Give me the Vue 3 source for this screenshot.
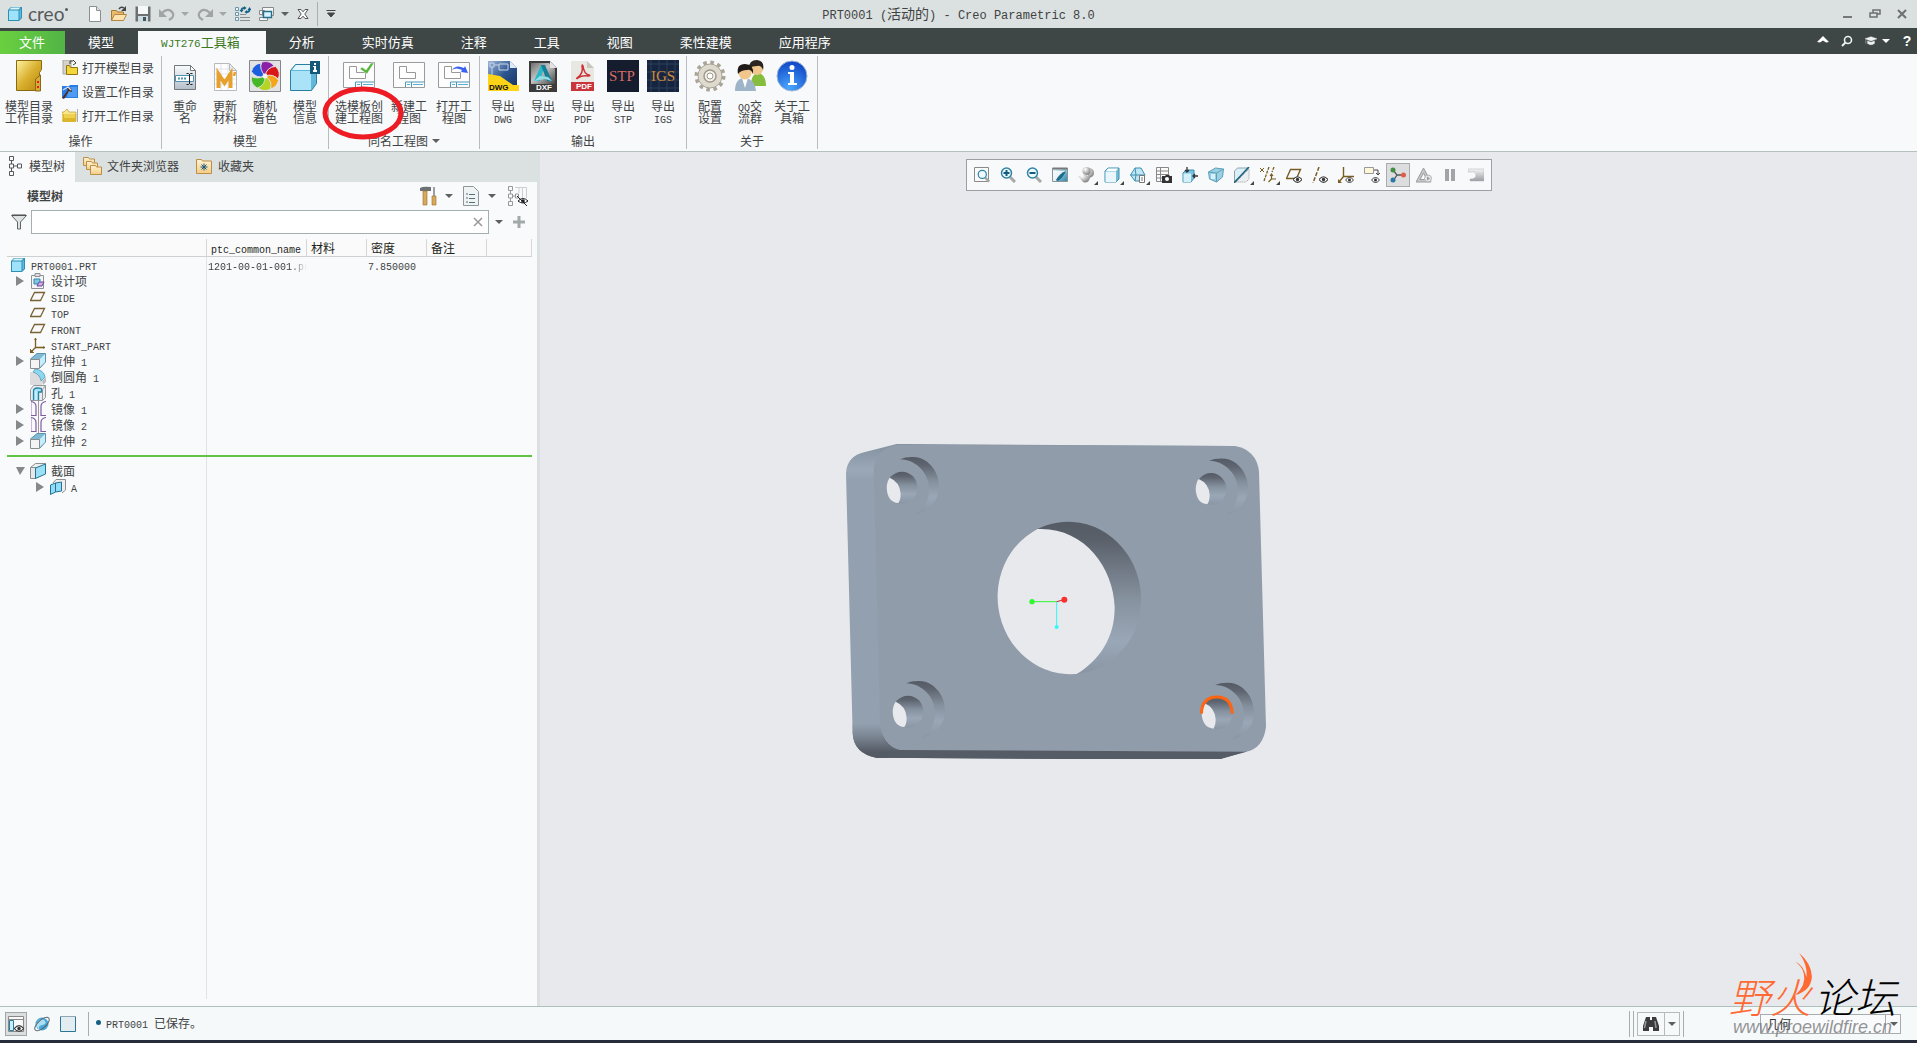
<script setup>
import { h, ref } from 'vue'

// Splits a string so that Latin runs take a half-width monospaced face beside full-width Han characters.
const Mix = (props) =>
  h('span', { class: 'mix' },
    props.text.split(/([\x20-\x7e]+)/).filter(Boolean).map((part) =>
      /^[\x20-\x7e]/.test(part) ? h('span', { class: 'lat' }, part) : part))
Mix.props = ['text']

const tabs = ['模型', 'WJT276工具箱', '分析', '实时仿真', '注释', '工具', '视图', '柔性建模', '应用程序']
const active = ref('WJT276工具箱')

const folderActions = [
  { icon: 'dir-open', label: '打开模型目录' },
  { icon: 'dir-set', label: '设置工作目录' },
  { icon: 'dir-work', label: '打开工作目录' },
]

const groups = [
  { name: '操作', cls: 'g-ops', items: [{ icon: 'dir-big', lines: ['模型目录', '工作目录'], w: 'w58' }], side: folderActions },
  { name: '模型', cls: 'g-model', items: [
    { icon: 'rename', lines: ['重命', '名'] },
    { icon: 'material', lines: ['更新', '材料'] },
    { icon: 'wheel', lines: ['随机', '着色'] },
    { icon: 'info-box', lines: ['模型', '信息'] },
  ] },
  { name: '同名工程图', cls: 'g-drw', caret: true, items: [
    { icon: 'drw-check', lines: ['选模板创', '建工程图'], w: 'w50', marked: true },
    { icon: 'drw', lines: ['新建工', '程图'], w: 'w50' },
    { icon: 'drw-open', lines: ['打开工', '程图'] },
  ] },
  { name: '输出', cls: 'g-out', items: [
    { icon: 'dwg', lines: ['导出', 'DWG'], cap: { t: 'DWG', x: 2, y: 30 } },
    { icon: 'dxf', lines: ['导出', 'DXF'], cap: { t: 'DXF', x: 9, y: 30 } },
    { icon: 'pdf', lines: ['导出', 'PDF'], cap: { t: 'PDF', x: 9, y: 29 } },
    { icon: 'stp', lines: ['导出', 'STP'], cap: { t: 'STP', x: 2, y: 21 } },
    { icon: 'igs', lines: ['导出', 'IGS'], cap: { t: 'IGS', x: 4, y: 21 } },
  ] },
  { name: '关于', cls: 'g-about', items: [
    { icon: 'gear', lines: ['配置', '设置'] },
    { icon: 'people', lines: ['QQ交', '流群'] },
    { icon: 'about', lines: ['关于工', '具箱'], w: 'w44' },
  ] },
]

const rows = [
  { lvl: 0, icon: 'part', text: 'PRT0001.PRT', name: '1201-00-01-001.prt', density: '7.850000' },
  { lvl: 1, arrow: 'right', icon: 'design', text: '设计项' },
  { lvl: 1, icon: 'plane', text: 'SIDE' },
  { lvl: 1, icon: 'plane', text: 'TOP' },
  { lvl: 1, icon: 'plane', text: 'FRONT' },
  { lvl: 1, icon: 'csys', text: 'START_PART' },
  { lvl: 1, arrow: 'right', icon: 'extrude', text: '拉伸 1' },
  { lvl: 1, icon: 'round', text: '倒圆角 1' },
  { lvl: 1, icon: 'hole', text: '孔 1' },
  { lvl: 1, arrow: 'right', icon: 'mirror', text: '镜像 1' },
  { lvl: 1, arrow: 'right', icon: 'mirror', text: '镜像 2' },
  { lvl: 1, arrow: 'right', icon: 'extrude', text: '拉伸 2' },
]
const sectionRows = [
  { lvl: 1, arrow: 'down', icon: 'section', text: '截面' },
  { lvl: 2, arrow: 'right', icon: 'section-a', text: 'A' },
]

const viewTools = [
  ['refit', '重新调整'], ['zoom-in', '放大'], ['zoom-out', '缩小'], ['repaint', '重画'], ['render', '渲染选项'],
  ['shade', '显示样式'], ['saved', '已保存方向'], ['viewmgr', '视图管理器'], ['normal', '视图法向'], ['persp', '透视图'],
  ['clip', '截面'], ['datum', '基准显示过滤器'], ['planes', '平面显示'], ['axes', '轴显示'], ['csysd', '坐标系显示'],
  ['notes', '注释显示'], ['spin', '旋转中心'], ['sim', '仿真'], ['pause', '暂停'], ['result', '结果'],
]
const query = ref('')
</script>

<template>
  <div class="app">
    <svg class="sprite" aria-hidden="true">
      <defs>
        <linearGradient id="gold" x1="0" y1="0" x2="1" y2="1"><stop offset="0" stop-color="#fff3a0" /><stop offset=".5" stop-color="#d9b030" /><stop offset="1" stop-color="#b8860b" /></linearGradient>
        <linearGradient id="tan" x1="0" y1="0" x2="0" y2="1"><stop offset="0" stop-color="#fff2d4" /><stop offset="1" stop-color="#f3cd86" /></linearGradient>
        <linearGradient id="blu" x1="0" y1="0" x2="1" y2="1"><stop offset="0" stop-color="#eefaff" /><stop offset="1" stop-color="#2b86ad" /></linearGradient>
        <linearGradient id="gry" x1="0" y1="0" x2="0" y2="1"><stop offset="0" stop-color="#f4f5f6" /><stop offset="1" stop-color="#9a9ea2" /></linearGradient>
        <linearGradient id="page" x1="0" y1="0" x2="0" y2="1"><stop offset="0" stop-color="#fafbfc" /><stop offset="1" stop-color="#b4bfca" /></linearGradient>
        <linearGradient id="dwgb" x1="0" y1="0" x2="1" y2="1"><stop offset="0" stop-color="#9fb6d8" /><stop offset=".5" stop-color="#2c5590" /><stop offset="1" stop-color="#15305c" /></linearGradient>
        <linearGradient id="dxfb" x1="0" y1="0" x2="1" y2="1"><stop offset="0" stop-color="#6e6e6e" /><stop offset=".45" stop-color="#c4c4c4" /><stop offset="1" stop-color="#454545" /></linearGradient>
        <radialGradient id="inf" cx=".4" cy=".9" r=".9"><stop offset="0" stop-color="#4aa8ff" /><stop offset="1" stop-color="#0f45c4" /></radialGradient>
        <radialGradient id="ball" cx=".35" cy=".3" r=".8"><stop offset="0" stop-color="#fff" /><stop offset="1" stop-color="#777" /></radialGradient>
      </defs>

      <!-- quick access -->
      <symbol id="cube" viewBox="0 0 16 16"><path d="M1 4l3-3h11v11l-3 3H1z" fill="#2d8fb3" /><path d="M2 4.500h9.500V14H2z" fill="#9fe2fb" /><path d="M2.500 3.500L4.500 1.500h9L11.500 3.500z" fill="#d9f5ff" /><path d="M12.500 4.500l1.500-2v9l-1.500 2z" fill="#5dbce0" /></symbol>
      <symbol id="new" viewBox="0 0 16 16"><path d="M2.500.5h7l4 4v11h-11z" fill="#fff" stroke="#8b8f92" /><path d="M9.500.5v4h4" fill="#dde1e4" stroke="#8b8f92" /></symbol>
      <symbol id="open" viewBox="0 0 16 16"><path d="M.5 14.500v-10h5l1 1.500h6v3" fill="#e9bb6c" stroke="#a87931" /><path d="M.5 14.500l3-6h12l-3 6z" fill="#ffe3ae" stroke="#b48642" /><path d="M8 3q2-3 5-1" fill="none" stroke="#444" stroke-width="1.500" /><path d="M15 0v5h-5z" fill="#444" /></symbol>
      <symbol id="save" viewBox="0 0 16 16"><path d="M.5.5h15v15H.5z" fill="#6d7072" /><path d="M3 0h10v8H3z" fill="#f6f7f8" /><path d="M3 10h10v6H3z" fill="#c9dde3" /><path d="M8 11h3v4H8z" fill="#4b5356" /></symbol>
      <symbol id="undo" viewBox="0 0 16 16"><path d="M3 7q5-5 9-2t1 7l-3 2" fill="none" stroke="#a0a4a5" stroke-width="2.200" /><path d="M0 3v8h8z" fill="#a0a4a5" /></symbol>
      <symbol id="redo" viewBox="0 0 16 16"><path d="M13 7Q8 2 4 5T3 12l3 2" fill="none" stroke="#a0a4a5" stroke-width="2.200" /><path d="M16 3v8H8z" fill="#a0a4a5" /></symbol>
      <symbol id="regen" viewBox="0 0 16 16"><g fill="#e9f7fc" stroke="#6d96a6"><path d="M.5 1.500h3v3h-3zM.5 6.500h3v3h-3zM.5 11.500h3v3h-3z" /></g><path d="M5 8.500h6M5 11.500h10M5 14.500h10" stroke="#8a8d8f" /><path d="M6.500 5V4q0-2 3-2M14.500 3v1q0 2-3 2" fill="none" stroke="#156487" stroke-width="1.800" /><path d="M9 0v4l2.500-2zM12 4v4L9.500 6zM4.500 4h4L6.500 6.500zM12.500 4h4l-2-3z" fill="#156487" /></symbol>
      <symbol id="wins" viewBox="0 0 16 16"><path d="M3.500 1.500h11v8h-11zM.5 4.500h5v4h-5zM.5 11.500h8v3h-8z" fill="#f6f8f8" stroke="#888" /><path d="M4.500 5.500h8v6h-8z" fill="#d7f2fc" stroke="#256f8d" stroke-width="1.400" /></symbol>
      <symbol id="closex" viewBox="0 0 12 12"><path d="M1 1.500h3l2 2.300 2-2.300h3L7.800 6 11 10.500H8L6 8.200 4 10.500H1L4.200 6z" fill="#fff" stroke="#555" /></symbol>
      <symbol id="caret" viewBox="0 0 8 8"><path d="M0 2h8L4 6z" fill="currentColor" /></symbol>
      <symbol id="custom" viewBox="0 0 10 10"><path d="M.5 1.500h9M1.500 4h7L5 8z" fill="#444" stroke="#444" /></symbol>

      <!-- ribbon -->
      <symbol id="dir-big" viewBox="0 0 32 32"><path d="M3.500.5h25v9l-2 3v18h-23z" fill="url(#gold)" stroke="#8a6a10" /><path d="M22.500 31V19l5-4v16z" fill="#d6ac36" stroke="#8a6a10" /><path d="M24 21h2v2h-2zM24 26h2v2h-2z" fill="#f01818" /></symbol>
      <symbol id="dir-open" viewBox="0 0 16 16"><path d="M1 0h8v14H1z" fill="#d5d2c9" stroke="#aaa79c" /><path d="M4.500 14.500v-9h3l1 2h7v7z" fill="#f3d53c" stroke="#8f7718" /><path d="M8 4V1h3M11 0l3 3-3 2" fill="none" stroke="#403c30" /></symbol>
      <symbol id="dir-set" viewBox="0 0 16 16"><path d="M0 2h7l1-1h8v13H0z" fill="#2c7be0" /><path d="M7 3h8v10H5z" fill="#4f9af2" /><path d="M0 14L6 6 4 3l5 1 1 4-3-1-5 8z" fill="#4d2d18" /><path d="M1 6l5-3 3 3" fill="none" stroke="#cfe4ff" stroke-width="1.300" /></symbol>
      <symbol id="dir-work" viewBox="0 0 16 16"><path d="M0 13V4h2l3-3 2 3h7v9z" fill="#f8e68a" stroke="#b08d20" stroke-width=".6" /><path d="M1 6h13v8H1z" fill="#dcb52d" /><path d="M2 6h11v4H2z" fill="#ecd04e" /><path d="M15.500 1v13" stroke="#aaa" /></symbol>
      <symbol id="rename" viewBox="0 0 32 32"><path d="M5.500 5.500h16l5 5v19h-21z" fill="url(#page)" stroke="#74797d" /><path d="M21.500 5.500v5h5z" fill="#fff" stroke="#74797d" /><path d="M6.500 15.500h18v6h-18z" fill="#fff" stroke="#4c94ae" /><path d="M9 18.500h9" stroke="#4c94ae" stroke-width="2" stroke-dasharray="2 1" /><path d="M17.500 13.500h2l1 1 1-1h2M20.500 14v10M17.500 24.500h2l1-1 1 1h2" fill="none" stroke="#222" /></symbol>
      <symbol id="material" viewBox="0 0 32 32"><path d="M5.500 3.500h15l7 7v20h-22z" fill="#fff" stroke="#b7bbc0" /><path d="M6 9h14M6 14h21M6 19h21M6 24h21M12 4v26M19 4v26" stroke="#dfe3ea" /><path d="M20.500 3.500v7h7z" fill="#e5e8ee" stroke="#b7bbc0" /><path d="M9.500 28V14l6 9 6-9v14" fill="none" stroke="#e5a02e" stroke-width="4" /><path d="M26 12l-1 4" stroke="#e5a02e" stroke-width="2.500" /></symbol>
      <symbol id="wheel" viewBox="0 0 32 32"><path d="M.5.5h31v31H.5z" fill="#e3e3e6" stroke="#85858a" /><g stroke="#e3e3e6" stroke-width=".8"><path id="blade" d="M16 16Q9 10 13 2q8-2 12 4-6 2-9 10z" fill="#8b1fa8" /><use href="#blade" /><path d="M16 16Q9 10 13 2q8-2 12 4-6 2-9 10z" fill="#d81818" transform="rotate(60 16 16)" /><path d="M16 16Q9 10 13 2q8-2 12 4-6 2-9 10z" fill="#f5a51c" transform="rotate(120 16 16)" /><path d="M16 16Q9 10 13 2q8-2 12 4-6 2-9 10z" fill="#b5d426" transform="rotate(170 16 16)" /><path d="M16 16Q9 10 13 2q8-2 12 4-6 2-9 10z" fill="#46b828" transform="rotate(225 16 16)" /><path d="M16 16Q9 10 13 2q8-2 12 4-6 2-9 10z" fill="#1d5ee0" transform="rotate(300 16 16)" /></g><circle cx="16" cy="16" r="2.500" fill="#f4f4f4" /></symbol>
      <symbol id="info-box" viewBox="0 0 32 32"><path d="M1.500 10.500l5-6h21v19l-5 7h-21z" fill="#62b8da" stroke="#2a7e9f" /><path d="M2 11h20v19H2z" fill="#aae3f8" /><path d="M3 10l4-5h20l-4.500 5z" fill="#e4f7fe" /><path d="M21 1h10v13H21z" fill="#14587a" /><path d="M25 3h2v2h-2zM24 6h3v4h1v2h-4v-2h1V7h-1z" fill="#fff" /></symbol>
      <symbol id="drw" viewBox="0 0 32 32"><path d="M.5 2.500h31v25H.5z" fill="#fdfdfd" stroke="#9b9b9b" /><path d="M6.500 18.500v-12h7v6h9v6z" fill="#fff" stroke="#999" /><path d="M12.500 27v-5h19M18.500 22v5" fill="none" stroke="#4b99b8" /><path d="M14 24.500h3M20 24.500h10" stroke="#58b1d0" /></symbol>
      <symbol id="drw-check" viewBox="0 0 32 32"><use href="#drw" width="32" height="32" /><path d="M17 9l2-2 4 3 5-7h3L24 14z" fill="#57b43a" stroke="#fff" stroke-width=".5" /></symbol>
      <symbol id="drw-open" viewBox="0 0 32 32"><use href="#drw" width="32" height="32" /><path d="M14 10q4-6 12-2l1-2 3 7-7-1 1-2q-6-3-10 0z" fill="#3a60ef" /></symbol>
      <symbol id="dwg" viewBox="0 0 32 32"><path d="M1 1h22l7 7v23H1z" fill="url(#dwgb)" /><path d="M23 1v7h7z" fill="#dfe8f4" /><path d="M3 3h4v4H3zM12 4h9v6h-9zM7 5h5M5 7v8" fill="none" stroke="#c6d5ea" /><path d="M1 14l12 2 13 9h6v6H1z" fill="#ffd318" /></symbol>
      <symbol id="dxf" viewBox="0 0 32 32"><path d="M2 1h21l7 7v24H2z" fill="#3b3b3b" /><path d="M4 3h18l6 6v15H4z" fill="url(#dxfb)" /><path d="M23 1v7h7z" fill="#e3e3e3" /><path d="M7 21L14 5h4l-5 16z" fill="#2bb8c9" /><path d="M14 5h4l7 16h-5z" fill="#167f95" /><path d="M7 21l6-5 8 1 4 4-7-2z" fill="#8fdfe8" /></symbol>
      <symbol id="pdf" viewBox="0 0 32 32"><path d="M4 1h16l7 7v23H4z" fill="#e9e7e2" /><path d="M20 1v7h7z" fill="#c9c6bf" /><path d="M4 22h23v9H4z" fill="#c9353b" /><path d="M10 18q7-5 5-12 0-2 1 0 1 8 6 9 2 1-1 1-6-1-10 2-2 1-1 0z" fill="none" stroke="#cc3238" stroke-width="1.500" /></symbol>
      <symbol id="stp" viewBox="0 0 32 32"><path d="M0 0h32v32H0z" fill="#141c2e" /></symbol>
      <symbol id="igs" viewBox="0 0 32 32"><path d="M0 0h32v32H0z" fill="#16243f" /><path d="M4 0v32M12 0v32M20 0v32M28 0v32M0 4h32M0 12h32M0 20h32M0 28h32" stroke="#2b4058" /></symbol>
      <symbol id="gear" viewBox="0 0 32 32"><circle cx="16" cy="16" r="13" fill="none" stroke="#aaa598" stroke-width="5" stroke-dasharray="3.400 3.400" /><circle cx="16" cy="16" r="12" fill="#dedace" stroke="#aaa598" /><circle cx="16" cy="16" r="6" fill="#f4f2ec" stroke="#a09a8c" stroke-width="1.500" /><circle cx="16" cy="16" r="3" fill="#fff" stroke="#a09a8c" /></symbol>
      <symbol id="people" viewBox="0 0 32 32"><path d="M17 26q0-13 8-13 7 2 7 13z" fill="#86bd3c" /><circle cx="23" cy="9" r="6" fill="#f1c68c" /><path d="M15 8q0-8 8-8 8 1 6 10-2-5-6-4-4 0-8 2z" fill="#2b2420" /><path d="M1 31q0-13 10-13 10 1 11 13z" fill="#9eb4c8" /><path d="M8 18l3 10 3-10z" fill="#fff" /><circle cx="11" cy="13" r="6.500" fill="#f1c68c" /><path d="M4 14q-2-10 7-10 9 0 8 10-2-5-6-4-6 0-9 4z" fill="#201b18" /></symbol>
      <symbol id="about" viewBox="0 0 32 32"><circle cx="16" cy="16" r="15" fill="url(#inf)" stroke="#9db4d6" /><circle cx="16" cy="7.500" r="2.500" fill="#fff" /><path d="M12 12h6v11h3v2h-9v-2h2v-9h-2z" fill="#fff" /></symbol>

      <!-- tree -->
      <symbol id="part" viewBox="0 0 16 16"><use href="#cube" width="16" height="16" /></symbol>
      <symbol id="design" viewBox="0 0 16 16"><path d="M1.500 2.500h12v13h-12z" fill="#f4f4f6" stroke="#8e9094" /><path d="M5 .5h5v3H5z" fill="#ddd" stroke="#8e9094" /><path d="M4 6h6v5H4z" fill="#7cc7e4" stroke="#2c87a8" /><path d="M7 13l2-4h5l-2 4z" fill="#c9b0e2" stroke="#73479f" /></symbol>
      <symbol id="plane" viewBox="0 0 16 16"><path d="M4.500 3.500h10l-4 8H.5z" fill="none" stroke="#7a6234" stroke-width="1.300" /></symbol>
      <symbol id="csys" viewBox="0 0 16 16"><path d="M5.500 1v9.500H15M5.500 10.500L1 15" fill="none" stroke="#7a5c22" stroke-width="1.300" /><path d="M4 2.500h3M13.500 9v3M0 12v4h4z" stroke="#7a5c22" stroke-width=".6" fill="#7a5c22" /></symbol>
      <symbol id="extrude" viewBox="0 0 16 16"><path d="M.5 6L7 .5h8.500V9L10 15z" fill="#7fb9d2" stroke="#5e93ab" /><path d="M10 6l5-5v8l-5 5z" fill="#c8ecf9" /><path d="M.5 6.500h9v9h-9z" fill="#f4f4f4" stroke="#8a8d90" /></symbol>
      <symbol id="round" viewBox="0 0 16 16"><path d="M0 3h6q5 2 6 8v5H0z" fill="#dcdcde" /><path d="M5 0q9 1 10 8l-4 4Q10 5 3 3z" fill="#8fd6f0" stroke="#4294b3" stroke-width=".7" /><path d="M12 12l4-4v5l-3 3z" fill="#b9bcc0" /></symbol>
      <symbol id="hole" viewBox="0 0 16 16"><path d="M.5 4.500l3-4h12v12l-3 3H.5z" fill="#ececee" stroke="#96999c" /><path d="M12.500 4.500v11M12.500 4.500l3-4" stroke="#96999c" /><path d="M3.500 15V6q0-3 4-3t4 1v3h-3v8" fill="#a5e2f8" stroke="#2484a6" stroke-width="1.300" /><path d="M6 6v9" stroke="#e7f8fe" /></symbol>
      <symbol id="mirror" viewBox="0 0 16 16"><path d="M8.500 0v16" stroke="#999" /><path d="M1 .5q5 1 5 5v9H1M16 .5q-5 1-5 5v9h5" fill="none" stroke="#825aa0" stroke-width="1.200" /><path d="M1.500 1v13" stroke="#cbb8dc" /></symbol>
      <symbol id="section" viewBox="0 0 16 16"><path d="M.5 4.500l5-4h10v10" fill="#eee" stroke="#8b8e92" /><path d="M.5 4.500h5v11h-5z" fill="#e8e8ea" stroke="#8b8e92" /><path d="M5.500 5l10-4v10l-10 4.500z" fill="#9be0f9" stroke="#27718e" /></symbol>
      <symbol id="section-a" viewBox="0 0 16 16"><path d="M3 4l3-3.500h9.500V11L12 14" fill="#eee" stroke="#8b8e92" /><path d="M.5 6l5-2 6-1v9l-6 1-5 2.500z" fill="#8edcf9" stroke="#27718e" /><path d="M5.500 4v9" stroke="#27718e" /></symbol>
      <symbol id="tree" viewBox="0 0 14 20"><g fill="none" stroke="#55595c"><path d="M.5.5h4v4h-4zM.5 15.500h4v4h-4zM.5 8h4v4h-4zM8.500 8h4v4h-4zM2.500 4.500V8M2.500 12v3.500M4.500 10h4" /></g></symbol>
      <symbol id="folders" viewBox="0 0 20 20"><g fill="url(#tan)" stroke="#bd8e45"><path d="M.5 9.500v-8h5l1 1.500h5v6.500z" /><path d="M3.500 13.500v-8h5l1 1.500h5v6.500z" /><path d="M7.500 18.500v-9h5l1 1.500h5v7.500z" /></g></symbol>
      <symbol id="fav" viewBox="0 0 16 16"><path d="M.5 15.500v-14h5l1 1.500h9v12.500z" fill="url(#tan)" stroke="#bd8e45" /><path d="M8 5.500v7M4.500 9h7M5.500 6.500l5 5M10.500 6.500l-5 5" stroke="#14587a" /></symbol>
      <symbol id="tools" viewBox="0 0 18 20"><path d="M1 5V2q3-2 11-1v4H8z" fill="#6d7174" /><path d="M4 5h4v14H4z" fill="#d9a95b" stroke="#98702b" stroke-width=".6" /><path d="M15 1v9" stroke="#888" stroke-width="1.600" /><path d="M13 10h4v9h-4z" fill="#d9a95b" stroke="#98702b" stroke-width=".6" /></symbol>
      <symbol id="sheet" viewBox="0 0 16 20"><path d="M.5.5h10l5 5v14H.5z" fill="#f0f3f4" stroke="#8b979c" /><path d="M6 8.500h6M6 12.500h6M6 16.500h6M3 8h2M3 12h2M3 16h2" stroke="#56707b" /></symbol>
      <symbol id="treehide" viewBox="0 0 20 20"><g fill="none" stroke="#97999b"><path d="M.5.500h4v4h-4zM.5 8h4v4h-4zM.5 15.500h4v4h-4zM2.500 4.500V8M2.500 12v3.500M4.500 10h3M7.500 8h3v4h-3z" /></g><path d="M7 1.500h4V7M14.500 12V1.500H11M18.500 12V1.500h-4" fill="none" stroke="#cdd0d1" /><path d="M10 15q5-5 10 0-5 4-10 0z" fill="#fff" stroke="#222" /><circle cx="15" cy="15" r="1.800" fill="#222" /><path d="M9 10l10 10" stroke="#222" /></symbol>
      <symbol id="funnel" viewBox="0 0 16 16"><path d="M.5 1.500h15l-6 6.500v7h-3V8z" fill="#dfe2e4" stroke="#606466" /><path d="M1 1h14" stroke="#444" /></symbol>
      <symbol id="plus" viewBox="0 0 12 12"><path d="M6 0v12M0 6h12" stroke="#a3a8aa" stroke-width="3" /></symbol>

      <!-- graphics toolbar -->
      <symbol id="eye" viewBox="0 0 8 6"><path d="M0 3q4-5 8 0-4 5-8 0z" fill="#fff" stroke="#3c3c3c" /><circle cx="4" cy="3" r="1.500" fill="#333" /></symbol>
      <symbol id="lens" viewBox="0 0 16 16"><path d="M10 10l5 5" stroke="#a7a7a7" stroke-width="3" /><circle cx="6.500" cy="6" r="5" fill="#eefaff" stroke="#2e83a4" stroke-width="1.500" /></symbol>
      <symbol id="refit" viewBox="0 0 16 16"><path d="M.5.5h14v14H.5z" fill="#fafafa" stroke="#8a8a8a" /><use href="#lens" x="3" y="2" width="13" height="14" /></symbol>
      <symbol id="zoom-in" viewBox="0 0 16 16"><use href="#lens" width="16" height="16" /><path d="M6.500 3v6M3.500 6h6" stroke="#145c7d" stroke-width="2" /></symbol>
      <symbol id="zoom-out" viewBox="0 0 16 16"><use href="#lens" width="16" height="16" /><path d="M3.500 6h6" stroke="#145c7d" stroke-width="2" /></symbol>
      <symbol id="repaint" viewBox="0 0 16 16"><path d="M.5 1.500h15v13H.5z" fill="url(#blu)" stroke="#8b9498" /><path d="M1 14h3q3-7 11-10H1z" fill="#fff" opacity=".8" /><path d="M.5 1.500h15" stroke="#777" stroke-width="2" /><path d="M4 13q4-7 10-9-3 7-8 10z" fill="#1c6c8c" /></symbol>
      <symbol id="render" viewBox="0 0 16 16"><path d="M6 1h6q4 1 4 5t-5 5z" fill="url(#ball)" /><circle cx="8.500" cy="4" r="4" fill="url(#ball)" /><path d="M0 9q5 1 7-2l5 4q-2 6-7 4z" fill="url(#ball)" /></symbol>
      <symbol id="shade" viewBox="0 0 16 16"><path d="M1 4l3-3h11v11l-3 3H1z" fill="#76bcd6" stroke="#3f91b0" /><path d="M1.500 4.500H12V15H1.500z" fill="#e9f7fc" /><path d="M4 1.500h10L12 4H2z" fill="#fff" /></symbol>
      <symbol id="saved" viewBox="0 0 16 16"><path d="M.5 8L5 1h6l4 7-4 6H5z" fill="#bfe6f4" stroke="#3d90b0" /><path d="M5 1l1 7H.5M6 8h9M6 8l-1 6" fill="none" stroke="#3d90b0" /><path d="M9.500 8.500h5v7h-5z" fill="#fff" stroke="#777" /><path d="M11 11h2M11 13h2" stroke="#777" /></symbol>
      <symbol id="viewmgr" viewBox="0 0 16 16"><path d="M.5.5h12v14H.5zM.5 4h12M.5 7.500h12M.5 11h12M4.500.5v14" fill="#fafafa" stroke="#888" /><path d="M6 9h3l1-1h3l1 1h2v7H6z" fill="#333" /><circle cx="11" cy="12" r="2" fill="#fff" /></symbol>
      <symbol id="normal" viewBox="0 0 16 16"><path d="M1 6l3-3h8v8l-3 4H1z" fill="#76c4e1" stroke="#3f91b0" /><path d="M1.500 6.500H9V15H1.500z" fill="#d4f1fb" /><path d="M5 0v5M3 3l2 2 2-2M16 9h-5M13 7l-2 2 2 2" fill="none" stroke="#333" stroke-width="1.300" /></symbol>
      <symbol id="persp" viewBox="0 0 16 16"><path d="M.5 5l7-4 8 1-1 8-6 5-7-3z" fill="#9dcfe2" stroke="#5aa0ba" /><path d="M.5 5l8 1 7-4M8.500 6v9" fill="none" stroke="#5aa0ba" /><path d="M3 7h4v5H3z" fill="#d5f0fa" /></symbol>
      <symbol id="clip" viewBox="0 0 16 16"><path d="M.5 15V4l3-3h11" fill="#dceff6" stroke="#8fa5ad" /><path d="M2 15L15 2v10l-3 3z" fill="#eceff1" stroke="#999" stroke-dasharray="1 1" /><path d="M0 16L15 0" stroke="#1b627f" stroke-width="1.600" /></symbol>
      <symbol id="datum" viewBox="0 0 16 16"><path d="M0 1l4 4M4 1L0 5" stroke="#7a5c22" /><path d="M9 0L4 14M14 0l-2 5" fill="none" stroke="#7a5c22" stroke-width="1.300" stroke-dasharray="3 1" /><path d="M11.500 7v5H16M11.500 12l-3 3M10 9l1.500-2L13 9" fill="none" stroke="#7a5c22" stroke-width="1.200" /></symbol>
      <symbol id="planes" viewBox="0 0 16 16"><path d="M4.500 2.500h10l-4 9H.5z" fill="none" stroke="#7a5c22" stroke-width="1.400" /><use href="#eye" x="7" y="9" width="9" height="7" /></symbol>
      <symbol id="axes" viewBox="0 0 16 16"><path d="M7 0L1 16" stroke="#7a5c22" stroke-width="1.500" stroke-dasharray="4 1.500" /><use href="#eye" x="7" y="9" width="9" height="7" /></symbol>
      <symbol id="csysd" viewBox="0 0 16 16"><path d="M5.500 0v9.500H16M5.500 9.500L1 15" fill="none" stroke="#7a5c22" stroke-width="1.400" /><path d="M0 12v4h4z" fill="#7a5c22" /><use href="#eye" x="7" y="10" width="9" height="6" /></symbol>
      <symbol id="notes" viewBox="0 0 16 16"><path d="M.5.5h9v6h-9z" fill="#fff7da" stroke="#999" /><path d="M10 3h4v5M12 6l2 2 2-2" fill="none" stroke="#444" /><use href="#eye" x="7" y="10" width="9" height="6" /></symbol>
      <symbol id="spin" viewBox="0 0 16 16"><path d="M3 3l4 5-4 6M7 8h7" fill="none" stroke="#555" stroke-width="1.300" /><circle cx="3" cy="3" r="2.500" fill="#3f8f3f" /><circle cx="3" cy="13" r="2.500" fill="#277aa8" /><circle cx="13.500" cy="8" r="2.500" fill="#e05c4a" /></symbol>
      <symbol id="sim" viewBox="0 0 16 16"><path d="M7.500 1L15 15H0zM7.500 6L4 12.500h7z" fill="#c4c6c8" fill-rule="evenodd" stroke="#9a9da0" /><circle cx="12" cy="11.500" r="3.500" fill="#e5e5e5" stroke="#b5b5b5" /><path d="M11 9.500l3 2-3 2z" fill="#999" /></symbol>
      <symbol id="pause" viewBox="0 0 16 16"><path d="M3 2h4v12H3zM9 2h4v12H9z" fill="#a2a5a7" /></symbol>
      <symbol id="result" viewBox="0 0 16 16"><path d="M0 2h16v12H2v-2q6 0 6-4T2 5H0z" fill="url(#gry)" stroke="#b0b3b5" stroke-width=".5" /></symbol>

      <!-- status bar -->
      <symbol id="nav" viewBox="0 0 16 16"><path d="M.5.5h15v15H.5z" fill="#fafafa" stroke="#888" /><path d="M1 3.500h14" stroke="#888" /><path d="M1.500 4.500h4v10h-4z" fill="#c9eefb" stroke="#2b7c9c" /><use href="#eye" x="6" y="9" width="10" height="7" /></symbol>
      <symbol id="globe" viewBox="0 0 16 16"><circle cx="8" cy="8" r="6.500" fill="#4aa9d6" /><path d="M5 4q4-2 6 1t-3 4-2 5q-4-3-4-6z" fill="#a9e0f5" /><ellipse cx="8" cy="8" rx="9" ry="4" fill="none" stroke="#5a6066" transform="rotate(-42 8 8)" /></symbol>
      <symbol id="pane" viewBox="0 0 16 16"><path d="M.5.5h15v15H.5z" fill="#e2ecf1" stroke="#2b7595" /><path d="M0 .5h16" stroke="#8fa7b2" /></symbol>
      <symbol id="binoc" viewBox="0 0 16 16"><path d="M3 1h4v3h2V1h4l3 9v5h-6v-4H6v4H0v-5z" fill="#3a3c3e" /><path d="M3 5l-1.500 7M12 5l1 7" stroke="#999" stroke-width="1.500" /></symbol>
      <symbol id="cap" viewBox="0 0 14 12"><path d="M0 3.500L7 1l7 2.500L7 6zM3 6v3q4 3 8 0V6L7 7.500zM1 5v4" fill="#eef1f1" stroke="#eef1f1" stroke-width=".5" /></symbol>
    </svg>

    <header class="titlebar">
      <div class="quick">
        <svg class="i16"><use href="#cube" /></svg>
        <span class="brand">creo<i></i></span>
        <button aria-label="新建"><svg class="i16"><use href="#new" /></svg></button>
        <button aria-label="打开"><svg class="i16"><use href="#open" /></svg></button>
        <button aria-label="保存"><svg class="i16"><use href="#save" /></svg></button>
        <button aria-label="撤消"><svg class="i16"><use href="#undo" /></svg><svg class="i8 dim"><use href="#caret" /></svg></button>
        <button aria-label="重做"><svg class="i16"><use href="#redo" /></svg><svg class="i8 dim"><use href="#caret" /></svg></button>
        <button aria-label="重新生成"><svg class="i16"><use href="#regen" /></svg></button>
        <button aria-label="窗口"><svg class="i16"><use href="#wins" /></svg><svg class="i8"><use href="#caret" /></svg></button>
        <button aria-label="关闭窗口"><svg class="i12"><use href="#closex" /></svg></button>
        <i class="vline"></i>
        <button aria-label="自定义快速访问工具栏"><svg class="i10"><use href="#custom" /></svg></button>
      </div>
      <h1 class="t14"><Mix text="PRT0001 (活动的) - Creo Parametric 8.0" /></h1>
      <div class="winctl">
        <button aria-label="最小化"><svg class="i12" viewBox="0 0 12 12"><path d="M1 9h9" stroke="#777" stroke-width="2" /></svg></button>
        <button aria-label="还原"><svg class="i12" viewBox="0 0 12 12"><path d="M1 5h7v4H1zM4 5V2h7v4H8" fill="none" stroke="#6d7070" stroke-width="1.500" /></svg></button>
        <button aria-label="关闭"><svg class="i12" viewBox="0 0 12 12"><path d="M2 2l8 8M10 2l-8 8" stroke="#6d7070" stroke-width="2" /></svg></button>
      </div>
    </header>

    <nav class="tabs t13">
      <button class="file">文件</button>
      <button v-for="t in tabs" :key="t" :class="{ on: t === active }" @click="active = t"><Mix :text="t" /></button>
      <div class="tabtools">
        <button aria-label="最小化功能区"><svg class="i12" viewBox="0 0 12 12"><path d="M0 7l6-6 6 6-3 .5-3-2-3 2z" fill="#fff" /></svg></button>
        <button aria-label="搜索"><svg class="i12" viewBox="0 0 12 12"><circle cx="7" cy="5" r="3.500" fill="none" stroke="#eef1f1" stroke-width="1.600" /><path d="M4.500 7.500L1 11" stroke="#eef1f1" stroke-width="2" /></svg></button>
        <button aria-label="学习"><svg class="i12"><use href="#cap" /></svg><svg class="i8"><use href="#caret" /></svg></button>
        <button class="help" aria-label="帮助">?</button>
      </div>
    </nav>

    <section class="ribbon">
      <div v-for="g in groups" :key="g.name" class="group" :class="g.cls">
        <div class="items">
          <button v-for="b in g.items" :key="b.icon" class="big" :class="b.w">
            <svg class="i32" viewBox="0 0 32 32">
              <use :href="'#' + b.icon" width="32" height="32" />
              <text v-if="b.cap" :class="'cap-' + b.icon" :x="b.cap.x" :y="b.cap.y">{{ b.cap.t }}</text>
            </svg>
            <span v-for="l in b.lines" :key="l" class="ln"><Mix :text="l" /></span>
            <svg v-if="b.marked" class="mark" viewBox="0 0 82 54"><ellipse cx="41" cy="27" rx="38" ry="24" fill="none" stroke="#ed1c24" stroke-width="5" /></svg>
          </button>
          <div v-if="g.side" class="side">
            <button v-for="s in g.side" :key="s.icon"><svg class="i16"><use :href="'#' + s.icon" /></svg>{{ s.label }}</button>
          </div>
        </div>
        <div class="gname">{{ g.name }}<svg v-if="g.caret" class="i8"><use href="#caret" /></svg></div>
      </div>
    </section>

    <main class="work">
      <aside class="panel">
        <div class="ptabs">
          <button class="on"><svg class="narrow"><use href="#tree" /></svg>模型树</button>
          <button><svg class="i20"><use href="#folders" /></svg>文件夹浏览器</button>
          <button><svg class="i16"><use href="#fav" /></svg>收藏夹</button>
        </div>
        <div class="pbody">
          <div class="phead">
            <h2>模型树</h2>
            <button aria-label="设置"><svg class="i20"><use href="#tools" /></svg><svg class="i8"><use href="#caret" /></svg></button>
            <button aria-label="显示"><svg class="i20"><use href="#sheet" /></svg><svg class="i8"><use href="#caret" /></svg></button>
            <button class="hide" aria-label="隐藏列"><svg class="i20"><use href="#treehide" /></svg></button>
          </div>
          <div class="filter">
            <label for="flt" aria-label="过滤"><svg class="i16"><use href="#funnel" /></svg></label>
            <div class="box">
              <input id="flt" v-model="query" type="text" />
              <button aria-label="清除" @click="query = ''"><svg class="i10" viewBox="0 0 10 10"><path d="M1 1l8 8M9 1L1 9" stroke="#999" stroke-width="1.500" /></svg></button>
            </div>
            <button aria-label="过滤选项"><svg class="i8"><use href="#caret" /></svg></button>
            <button aria-label="添加"><svg class="i12"><use href="#plus" /></svg></button>
          </div>
          <div class="treewrap">
            <table>
              <colgroup><col class="c1" /><col class="c2" /><col class="c3" /><col class="c3" /><col class="c3" /><col /></colgroup>
              <thead>
                <tr><th></th><th><Mix text="ptc_common_name" /></th><th>材料</th><th>密度</th><th>备注</th><th></th></tr>
              </thead>
              <tbody>
                <tr v-for="r in rows" :key="r.text">
                  <td><div class="node" :class="'l' + r.lvl"><i class="tw" :class="r.arrow"></i><svg class="i16"><use :href="'#' + r.icon" /></svg><Mix :text="r.text" /></div></td>
                  <td class="fade"><Mix v-if="r.name" :text="r.name" /></td><td></td>
                  <td><Mix v-if="r.density" :text="r.density" /></td><td></td><td></td>
                </tr>
                <tr class="rule"><td colspan="6"><hr /></td></tr>
                <tr v-for="r in sectionRows" :key="r.text">
                  <td colspan="6"><div class="node" :class="'l' + r.lvl"><i class="tw" :class="r.arrow"></i><svg class="i16"><use :href="'#' + r.icon" /></svg><Mix :text="r.text" /></div></td>
                </tr>
              </tbody>
            </table>
          </div>
        </div>
      </aside>

      <section class="view">
        <div class="gbar">
          <button v-for="(v, i) in viewTools" :key="v[0]" :aria-label="v[1]" :class="{ on: v[0] === 'spin' }">
            <svg class="i16"><use :href="'#' + v[0]" /></svg>
            <i v-if="[4, 5, 6, 10, 11].includes(i)" class="more"></i>
          </button>
        </div>
        <svg class="model" viewBox="0 0 1350 1020" role="img" aria-label="PRT0001">
          <defs>
            <linearGradient id="bore" x1="0" y1="0" x2="0" y2="1"><stop offset="0" stop-color="#555b65" /><stop offset=".12" stop-color="#59606a" /><stop offset=".5" stop-color="#86919e" /><stop offset=".78" stop-color="#9aa7b7" /><stop offset="1" stop-color="#8793a1" /></linearGradient>
            <linearGradient id="small" x1="0" y1="0" x2="0" y2="1"><stop offset="0" stop-color="#555b65" /><stop offset=".14" stop-color="#5e6570" /><stop offset=".42" stop-color="#84909d" /><stop offset=".7" stop-color="#9aa7b7" /><stop offset="1" stop-color="#8a96a4" /></linearGradient>
            <linearGradient id="edge" gradientUnits="userSpaceOnUse" x1="0" y1="45" x2="0" y2="985"><stop offset="0" stop-color="#8491a0" /><stop offset=".08" stop-color="#9aa8b8" /><stop offset=".11" stop-color="#93a0af" /><stop offset=".89" stop-color="#93a0af" /><stop offset=".93" stop-color="#7b8693" /><stop offset=".98" stop-color="#555b65" /></linearGradient>
            <clipPath id="mainhole"><ellipse cx="718" cy="504" rx="215" ry="229" transform="rotate(-8 718 504)" /></clipPath>
            <g id="screw">
              <path d="M10 7Q30 -2 60 1C98 8 127 45 127 88 127 130 98 165 59 170 80 155 97 135 97 95 97 50 60 8 10 7z" fill="url(#small)" />
              <ellipse cx="16" cy="92" rx="46" ry="48" fill="url(#small)" />
              <path d="M-21 62Q10 75 12 110 12 128 5 138-28 135-30 92-29 72-21 62z" fill="#e8e9ed" />
            </g>
          </defs>
          <path d="M48 130Q50 78 105 66L200 42h20L1215 48 1250 965 1172 986H700L140 983Q72 972 68 910z" fill="url(#edge)" />
          <path d="M150 910L200 959 1250 964 1172 987H695L140 983 110 965z" fill="#565c66" />
          <path d="M68 880L150 880Q155 950 210 960L170 984H140Q70 970 68 910z" fill="url(#edge)" />
          <path d="M131 120Q138 55 200 44L1215 48Q1280 60 1287 125L1308 890Q1300 955 1248 965L210 960Q156 948 150 880z" fill="#909caa" />
          <g clip-path="url(#mainhole)">
            <rect x="490" y="270" width="460" height="470" fill="url(#bore)" />
            <path d="M622 297C760 290 850 410 854 530 855 620 810 690 740 732L700 760 460 740V297z" fill="#e8e9ed" />
          </g>
          <use href="#screw" x="200" y="81" />
          <use href="#screw" x="1127" y="85" />
          <use href="#screw" x="218" y="753" />
          <use href="#screw" x="1145" y="758" />
          <path d="M1114 851Q1116 802 1160 801T1207 851" fill="none" stroke="#ff6410" stroke-width="9" />
          <path d="M606 515h74" stroke="#30f830" stroke-width="3" /><path d="M680 515v76" stroke="#30f8f8" stroke-width="3" /><path d="M680 515l23-6" stroke="#d02020" stroke-width="3" />
          <circle cx="606" cy="515" r="8" fill="#30f830" /><circle cx="680" cy="591" r="6" fill="#30f8f8" /><circle cx="703" cy="509" r="9" fill="#f83030" />
        </svg>
      </section>
    </main>

    <footer class="status">
      <button class="on" aria-label="导航器"><svg class="i16"><use href="#nav" /></svg></button>
      <button aria-label="浏览器"><svg class="i16"><use href="#globe" /></svg></button>
      <button aria-label="全屏"><svg class="i16"><use href="#pane" /></svg></button>
      <i class="sep"></i>
      <p><b></b><Mix text="PRT0001 已保存。" /></p>
      <div class="tray">
        <i></i><i></i>
        <div class="find">
          <button aria-label="查找"><svg class="i16"><use href="#binoc" /></svg></button>
          <button aria-label="查找选项"><svg class="i8"><use href="#caret" /></svg></button>
        </div>
        <i></i>
      </div>
      <div class="pick">
        <select aria-label="选择过滤器"><option>几何</option></select>
        <span><svg class="i8"><use href="#caret" /></svg></span>
      </div>
      <div class="logo">
        <div class="cn"><em>野火</em>论坛</div>
        <svg class="flame" viewBox="0 0 50 128"><path d="M12 0Q48 30 50 70 48 112 0 126 34 96 26 62 22 40 0 26 24 34 34 72 38 36 12 0z" fill="#ff6a33" /></svg>
        <div class="url">www.proewildfire.cn</div>
      </div>
    </footer>
    <div class="taskbar"></div>
  </div>
</template>

<style>
body { margin: 0; }
.lat { font-family: "Liberation Mono", monospace; font-size: 10px; line-height: 0; white-space: pre; }
.t13 .lat { font-size: 11px; }
.t14 .lat { font-size: 12px; }
</style>

<style scoped>
.app { display: flex; flex-direction: column; height: 100vh; overflow: hidden; font: 12px/16px "Noto Sans CJK SC", sans-serif; color: #3f4344; background: #f8fafb; }
.sprite { position: absolute; width: 0; height: 0; }
button { display: flex; align-items: center; justify-content: center; padding: 0; border: 0; background: none; font: inherit; color: inherit; }
svg { display: block; flex: none; }
.i8 { width: 8px; height: 8px; color: #5c6061; }
.i10 { width: 10px; height: 10px; }
.i12 { width: 12px; height: 12px; }
.i16 { width: 16px; height: 16px; }
.i20 { width: 20px; height: 20px; }
.i32 { width: 32px; height: 32px; }
.dim { color: #a3a7a8; }

.titlebar { display: grid; grid-template-columns: 1fr auto 1fr; align-items: center; height: 28px; background: #dbe0e0; }
.quick { display: flex; align-items: center; gap: 8px; padding-left: 7px; }
.quick button { gap: 6px; }
.brand { display: flex; width: 51px; margin-left: -3px; font: 19px/24px Lato, sans-serif; color: #55595b; }
.brand i { width: 3px; height: 3px; margin: 6px 0 0 1px; border-radius: 50%; background: #55595b; }
.vline { width: 1px; height: 24px; background: #a9adad; }
h1 { margin: 0; padding-bottom: 2px; font-size: 14px; font-weight: 400; line-height: 20px; }
.winctl { display: flex; justify-content: flex-end; gap: 15px; padding-right: 9px; }

.tabs { display: flex; align-items: stretch; height: 23px; padding-top: 3px; background: #3e4646; color: #fff; font-size: 13px; }
.tabs > button { padding: 0 24px 2px 23px; }
.tabs > .file { padding: 0 20px 2px 19px; background: linear-gradient(90deg, #6ad03f, #52b446); }
.tabs > .on { padding-right: 26px; background: #f8f9fb; color: #3b7a1e; }
.tabtools { display: flex; gap: 12px; margin-left: auto; padding: 0 5px 3px 0; }
.tabtools button { gap: 5px; }
.tabtools .i8 { color: #fff; }
.help { width: 10px; font: 700 14px/20px "Liberation Sans", sans-serif; }

.ribbon { display: flex; height: 97px; border-bottom: 1px solid #b4c1bf; background: #f8f9fb; }
.group { display: flex; flex-direction: column; box-sizing: border-box; height: 93px; margin-top: 2px; border-right: 1px solid #b9bcbe; }
.items { display: flex; align-items: flex-start; height: 77px; padding: 0 3px; }
.g-ops { width: 162px; }
.g-ops .items { padding: 0; }
.g-model { width: 167px; }
.g-drw { width: 151px; }
.g-drw .items { padding-left: 5px; }
.g-out { width: 207px; }
.g-about { width: 131px; }
.big { position: relative; flex-direction: column; justify-content: flex-start; flex: none; width: 40px; padding-top: 4px; }
.w44 { width: 44px; }
.w50 { width: 50px; }
.w58 { width: 58px; }
.big .i32 { margin-bottom: 8px; }
.ln { line-height: 12px; white-space: nowrap; }
text { font: 700 8px "Liberation Sans", sans-serif; fill: #fff; }
.cap-dwg { fill: #111; }
.cap-stp { font: 15px "Liberation Serif", serif; fill: #d76a62; }
.cap-igs { font: 15px "Liberation Serif", serif; fill: #d48a38; }
.mark { position: absolute; z-index: 2; left: -12px; top: 30px; width: 82px; height: 54px; }
.side { display: flex; flex-direction: column; padding-left: 4px; }
.side button { gap: 4px; height: 24px; white-space: nowrap; }
.gname { display: flex; align-items: center; justify-content: center; gap: 4px; line-height: 16px; }

.work { display: flex; flex: 1; min-height: 0; }
.panel { display: flex; flex-direction: column; flex: none; width: 540px; background: #dbe0e0; }
.ptabs { display: flex; height: 30px; }
.ptabs button { gap: 4px; padding: 0 9px 2px 8px; }
.ptabs button + button + button { gap: 6px; }
.ptabs .on { gap: 6px; width: 75px; background: #f8fafb; }
.narrow { width: 14px; height: 20px; }
.pbody { display: flex; flex-direction: column; flex: 1; min-height: 0; margin-right: 3px; background: #f8fafb; }
.phead { display: flex; align-items: center; gap: 8px; height: 27px; padding: 0 9px 0 27px; }
.phead h2 { flex: 1; margin: 0; font-size: 12px; line-height: 16px; }
.phead button { gap: 7px; }
.phead .hide { margin-left: 4px; }
.filter { display: flex; align-items: center; height: 26px; padding: 0 8px 0 11px; }
.filter label { width: 20px; }
.box { display: flex; flex: 1; box-sizing: border-box; height: 24px; border: 1px solid #a3afb1; background: #fff; }
.box input { flex: 1; min-width: 0; padding: 0 4px; border: 0; outline: 0; background: none; font: inherit; }
.box button { width: 20px; }
.filter > button { width: 20px; }
.treewrap { flex: 1; margin: 4px 5px 7px 7px; background: linear-gradient(#dfe3e4, #dfe3e4) 199px 0 / 1px 100% no-repeat; }
table { width: 100%; border-collapse: separate; border-spacing: 0; table-layout: fixed; }
.c1 { width: 200px; }
.c2 { width: 100px; }
.c3 { width: 60px; }
th { box-sizing: border-box; height: 18px; padding: 0 0 0 4px; border-right: 1px solid #d5d8d9; border-bottom: 1px solid #cdd1d2; background: #fafafa; color: #1d1f20; font-weight: 400; line-height: 16px; text-align: left; white-space: nowrap; }
td { height: 16px; padding: 0 0 0 1px; overflow: hidden; line-height: 16px; white-space: nowrap; }
td:first-child { padding: 0; }
.fade { -webkit-mask-image: linear-gradient(90deg, #000 84%, transparent); mask-image: linear-gradient(90deg, #000 84%, transparent); }
.node { display: flex; align-items: center; height: 16px; gap: 5px; }
.l0 { padding-left: 3px; }
.l0 .tw { display: none; }
.l1 { padding-left: 9px; }
.l2 { padding-left: 29px; }
.tw { width: 9px; height: 10px; }
.tw.right { background: #85898a; clip-path: polygon(0 0, 8px 5px, 0 10px); }
.tw.down { background: #85898a; clip-path: polygon(0 1px, 9px 1px, 4px 9px); }
.rule td { height: 14px; }
hr { height: 2px; margin: 0; border: 0; background: #62c244; }

.view { position: relative; flex: 1; min-width: 0; background: #e8e9ed; }
.gbar { display: flex; justify-content: center; box-sizing: border-box; width: 526px; height: 32px; margin: 7px auto 0; padding: 3px 0; border: 1px solid #9da0a2; background: #f8f9fb; }
.gbar button { position: relative; box-sizing: border-box; width: 26px; }
.gbar .on { width: 24px; margin: 0 1px; border: 1px solid #a9abad; background: #dcdddf; }
.more { position: absolute; right: 1px; bottom: 2px; border: 2px solid #444; border-top-color: transparent; border-left-color: transparent; }
.model { position: absolute; left: 290px; top: 278px; width: 450px; height: 340px; }

.status { position: relative; display: flex; align-items: center; box-sizing: border-box; height: 34px; padding: 0 16px 0 5px; border-top: 1px solid #aebfbc; background: #f5f9fa; }
.status > button { box-sizing: border-box; width: 22px; height: 24px; margin-right: 4px; }
.status > .on { border: 1px solid #a3a6a8; background: #dcdddf; }
.sep { width: 1px; height: 24px; margin: 0 7px 0 5px; background: #aaadae; }
.status p { display: flex; align-items: center; gap: 5px; margin: 0 auto 2px 0; }
.status b { width: 5px; height: 5px; border-radius: 50%; background: #155f83; }
.tray { display: flex; align-items: center; gap: 3px; margin-right: 76px; }
.tray i { width: 1px; height: 26px; background: #aaadae; }
.find { display: flex; height: 22px; border: 1px solid #b7babb; }
.find button { width: 26px; }
.find button + button { width: 15px; border-left: 1px solid #b7babb; }
.pick { position: relative; width: 141px; height: 20px; }
.pick select { box-sizing: border-box; width: 100%; height: 20px; padding: 0 6px; border: 1px solid #a9acad; border-radius: 0; appearance: none; background: #f8fafb; font: inherit; color: #333; }
.pick span { position: absolute; right: 0; top: 0; display: flex; align-items: center; justify-content: center; box-sizing: border-box; width: 16px; height: 20px; border-left: 1px solid #a9acad; pointer-events: none; }
.logo { position: absolute; right: 18px; bottom: 3px; width: 170px; pointer-events: none; }
.cn { color: #000; font-size: 41px; font-weight: 300; font-style: italic; line-height: 44px; white-space: nowrap; }
.cn em { margin-right: 3px; color: #ff6a33; }
.flame { position: absolute; left: 66px; top: -20px; width: 17px; height: 43px; }
.url { margin-left: 4px; color: rgba(120, 120, 124, .8); font: italic 18px/20px "Liberation Sans", sans-serif; }
.taskbar { height: 3px; background: #262c3a; }
</style>
